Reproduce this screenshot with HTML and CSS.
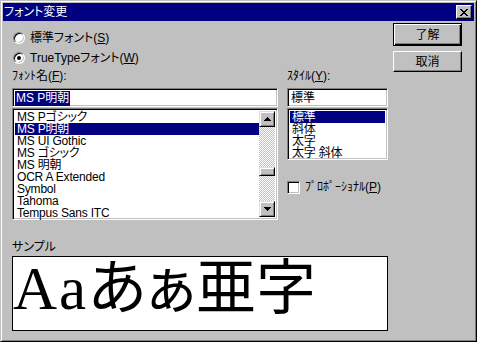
FILE: index.html
```html
<!DOCTYPE html>
<html lang="ja">
<head>
<meta charset="utf-8">
<title>フォント変更</title>
<link rel="stylesheet" href="styles.css">
</head>
<body>
<div class="window">
  <div class="titlebar">
    <span class="title">フォント変更</span>
    <span class="close"><svg width="8" height="7" viewBox="0 0 8 7" shape-rendering="crispEdges"><path fill="#000" d="M0 0h2v1H0zM6 0h2v1H6zM1 1h2v1H1zM5 1h2v1H5zM2 2h4v1H2zM3 3h2v1H3zM2 4h4v1H2zM1 5h2v1H1zM5 5h2v1H5zM0 6h2v1H0zM6 6h2v1H6z"/></svg></span>
  </div>
  <div class="content">
    <div class="main">
      <div class="radio-row"><span class="radio"></span><span>標準フォント(<u>S</u>)</span></div>
      <div class="radio-row"><span class="radio checked"></span><span>TrueTypeフォント(<u>W</u>)</span></div>
      <div class="cols">
        <div class="fontcol">
          <div class="label">ﾌｫﾝﾄ名(<u>F</u>):</div>
          <div class="edit"><span class="sel">MS P明朝</span></div>
          <div class="listbox tall">
            <ul class="items">
              <li>MS Pゴシック</li>
              <li class="selected">MS P明朝</li>
              <li>MS UI Gothic</li>
              <li>MS ゴシック</li>
              <li>MS 明朝</li>
              <li>OCR A Extended</li>
              <li>Symbol</li>
              <li>Tahoma</li>
              <li>Tempus Sans ITC</li>
            </ul>
            <div class="scrollbar">
              <div class="sbtn"><svg width="7" height="4" viewBox="0 0 7 4" shape-rendering="crispEdges"><path fill="#000" d="M3 0h1v1H3zM2 1h3v1H2zM1 2h5v1H1zM0 3h7v1H0z"/></svg></div>
              <div class="track"><div class="thumb"></div></div>
              <div class="sbtn"><svg width="7" height="4" viewBox="0 0 7 4" shape-rendering="crispEdges"><path fill="#000" d="M0 0h7v1H0zM1 1h5v1H1zM2 2h3v1H2zM3 3h1v1H3z"/></svg></div>
            </div>
          </div>
        </div>
        <div class="stylecol">
          <div class="label">ｽﾀｲﾙ(<u>Y</u>):</div>
          <div class="edit"><span class="plain">標準</span></div>
          <div class="listbox short">
            <ul class="items">
              <li class="selected">標準</li>
              <li>斜体</li>
              <li>太字</li>
              <li>太字 斜体</li>
            </ul>
          </div>
          <div class="check-row"><span class="checkbox"></span><span>ﾌﾟﾛﾎﾟｰｼｮﾅﾙ(<u>P</u>)</span></div>
        </div>
      </div>
      <div class="sample-label">サンプル</div>
      <div class="sample"><span class="latin">Aa</span>あぁ亜字</div>
    </div>
    <div class="buttons">
      <div class="btn default">了解</div>
      <div class="btn cancel">取消</div>
    </div>
  </div>
</div>
</body>
</html>
```
FILE: styles.css
```css
* { box-sizing: border-box; margin: 0; padding: 0; }
html, body { width: 477px; height: 342px; overflow: hidden; }
body {
  background: #c0c0c0;
  font-family: "Liberation Sans", "Noto Sans CJK JP", sans-serif;
  font-size: 12px;
  color: #000;
  font-feature-settings: "palt";
}
u { text-decoration: underline; text-underline-offset: 1px; }

.window {
  width: 477px;
  height: 342px;
  border: 1px solid;
  border-color: #c0c0c0 #000 #000 #c0c0c0;
  box-shadow: inset 1px 1px #fff, inset -1px -1px #808080;
  padding: 2px;
  background: #c0c0c0;
  display: flex;
  flex-direction: column;
}

.titlebar {
  height: 18px;
  flex: none;
  background: #000080;
  color: #fff;
  display: flex;
  align-items: center;
  justify-content: space-between;
  padding: 0 2px 0 1px;
  line-height: 18px;
}
.close {
  width: 16px;
  height: 14px;
  background: #c0c0c0;
  border: 1px solid;
  border-color: #fff #000 #000 #fff;
  box-shadow: inset -1px -1px #808080;
  display: flex;
  align-items: center;
  justify-content: center;
}
.close svg { display: block; }

.content { display: flex; padding-left: 9px; }
.main { width: 376px; padding-top: 7px; }

.radio-row {
  height: 20px;
  display: flex;
  align-items: center;
  gap: 5px;
  padding-left: 1px;
  line-height: 14px;
}
.radio {
  width: 12px;
  height: 12px;
  border-radius: 50%;
  background: #fff;
  border: 1px solid;
  border-color: #808080 #fff #fff #808080;
  box-shadow: inset 1px 1px #000, inset -1px -1px #c0c0c0;
  display: flex;
  align-items: center;
  justify-content: center;
}
.radio.checked::after {
  content: "";
  width: 4px;
  height: 4px;
  border-radius: 50%;
  background: #000;
}

.cols { display: flex; }
.fontcol { width: 266px; }
.stylecol { width: 101px; margin-left: 9px; }

.label { height: 17px; line-height: 17px; }

.edit, .listbox {
  background: #fff;
  border: 1px solid;
  border-color: #808080 #fff #fff #808080;
  box-shadow: inset 1px 1px #000, inset -1px -1px #c0c0c0;
}
.edit {
  margin-top: 3px;
  height: 19px;
  padding: 1px 2px 0 2px;
  display: flex;
  align-items: center;
  white-space: nowrap;
}
.edit .sel {
  background: #000080;
  color: #fff;
  line-height: 15px;
  padding: 0 1px;
}
.edit .plain { line-height: 15px; padding: 0 1px; }

.listbox {
  margin-top: 1px;
  padding: 2px;
  display: flex;
}
.listbox.tall { height: 112px; }
.listbox.short { height: 52px; }

.items {
  list-style: none;
  flex: 1;
  white-space: nowrap;
}
.items li {
  height: 12px;
  line-height: 12px;
  padding-left: 2px;
  letter-spacing: -0.2px;
}
.items li.selected { background: #000080; color: #fff; }

.scrollbar {
  width: 16px;
  display: flex;
  flex-direction: column;
}
.sbtn, .thumb {
  background: #c0c0c0;
  border: 1px solid;
  border-color: #dfdfdf #000 #000 #dfdfdf;
  box-shadow: inset 1px 1px #fff, inset -1px -1px #808080;
}
.sbtn {
  height: 16px;
  display: flex;
  align-items: center;
  justify-content: center;
}
.sbtn svg { display: block; }
.track {
  flex: 1;
  background: repeating-conic-gradient(#c0c0c0 0% 25%, #fff 0% 50%) 0 0 / 2px 2px;
  padding-top: 40px;
}
.thumb { height: 9px; }

.check-row {
  margin-top: 21px;
  display: flex;
  align-items: center;
  gap: 5px;
  height: 13px;
  line-height: 13px;
}
.checkbox {
  width: 13px;
  height: 13px;
  flex: none;
  background: #fff;
  border: 1px solid;
  border-color: #808080 #fff #fff #808080;
  box-shadow: inset 1px 1px #000, inset -1px -1px #c0c0c0;
}

.sample-label {
  margin-top: 20px;
  height: 14px;
  line-height: 14px;
}
.sample {
  margin-top: 2px;
  height: 75px;
  border: 1px solid #000;
  background: #fff;
  font-family: "Liberation Serif", "Noto Sans CJK JP", serif;
  font-size: 60px;
  line-height: 60px;
  padding-top: 2px;
  white-space: nowrap;
  overflow: hidden;
}
.sample .latin { font-size: 61px; letter-spacing: 2px; }

.buttons { margin-left: 5px; width: 69px; padding-top: 2px; }
.btn {
  background: #c0c0c0;
  display: flex;
  align-items: center;
  justify-content: center;
  line-height: 14px;
  border: 1px solid;
}
.btn.default {
  height: 23px;
  border-color: #000;
  box-shadow: inset 1px 1px #fff, inset -1px -1px #000, inset -2px -2px #808080;
}
.btn.cancel {
  margin-top: 5px;
  height: 21px;
  border-color: #fff #000 #000 #fff;
  box-shadow: inset -1px -1px #808080;
}
```
